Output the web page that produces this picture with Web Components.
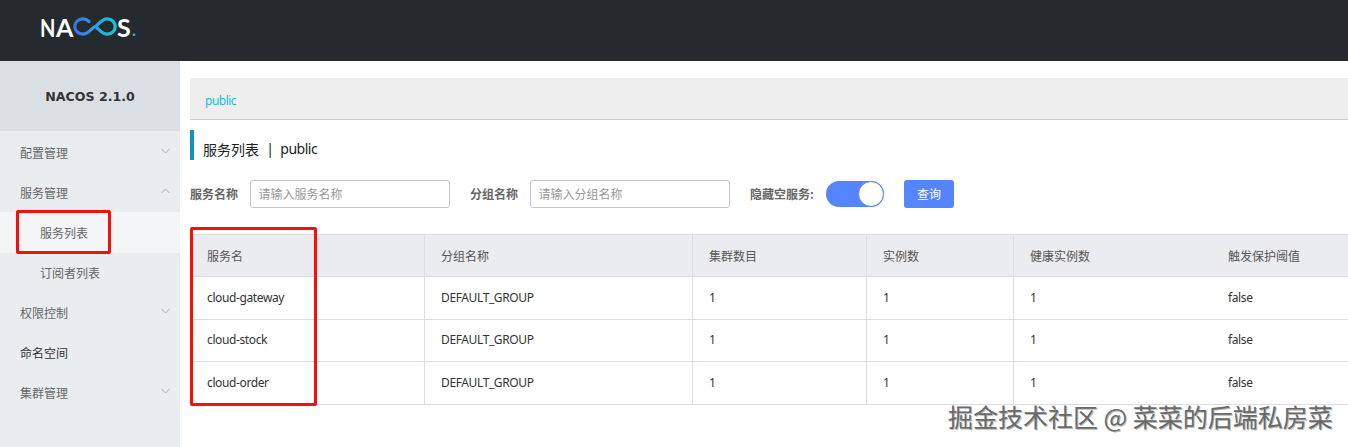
<!DOCTYPE html>
<html lang="zh"><head><meta charset="utf-8"><title>Nacos</title>
<style>
html,body{margin:0;padding:0;height:447px;overflow:hidden;background:#fff;font-family:"Noto Sans","Noto Sans CJK SC",sans-serif;font-size:12px;color:#333}
</style></head><body>
<nacos-app>
  <nacos-header slot="header"></nacos-header>
  <nacos-sidebar slot="sidebar" version="NACOS 2.1.0">
    <nav-item arrow="down">配置管理</nav-item>
    <nav-item arrow="up">服务管理</nav-item>
    <nav-item sub active>服务列表</nav-item>
    <nav-item sub>订阅者列表</nav-item>
    <nav-item arrow="down">权限控制</nav-item>
    <nav-item dark>命名空间</nav-item>
    <nav-item arrow="down">集群管理</nav-item>
  </nacos-sidebar>
  <namespace-bar>public</namespace-bar>
  <page-title sub="public">服务列表</page-title>
  <search-bar></search-bar>
  <service-table></service-table>
</nacos-app>
<script>
const CJK='"Noto Sans CJK SC",sans-serif';
function def(name,html){
  customElements.define(name,class extends HTMLElement{
    connectedCallback(){
      if(this.shadowRoot)return;
      const r=this.attachShadow({mode:'open'});
      r.innerHTML=typeof html==='function'?html(this):html;
    }
  });
}
def('nacos-app',`<style>
:host{display:grid;position:relative;grid-template-columns:180px 1fr;grid-template-rows:61px 386px;width:1348px;height:447px;overflow:hidden}
.h{grid-column:1/3}
main{padding:17px 0 0 10px;min-width:0;overflow:hidden}
.mark{position:absolute;box-sizing:border-box;border:3px solid #f5100c;border-radius:2px;pointer-events:none}
.m1{left:16px;top:210px;width:94.500px;height:43.500px}
.m2{left:190px;top:226.500px;width:127px;height:179.500px}
.wm{position:absolute;left:948px;top:399px;font:25px/34px ${CJK};color:#6a6a6a;white-space:nowrap;text-shadow:1px 1px 0 #bdbdbd}
</style>
<div class="h"><slot name="header"></slot></div>
<slot name="sidebar"></slot>
<main><slot></slot></main>
<div class="mark m1"></div><div class="mark m2"></div>
<div class="wm">掘金技术社区 @ 菜菜的后端私房菜</div>`);
def('nacos-header',`<style>
:host{display:flex;align-items:center;height:61px;background:#252a2f;padding-left:40px;box-sizing:border-box}
.logo{display:flex;align-items:center;height:20px;margin-top:-8px;font:700 25px/20px Lato,"Noto Sans",sans-serif;color:#fff}
.n{display:inline-block;width:16px;transform:scaleX(.8);transform-origin:0 50%}
.a{display:inline-block;width:17px;transform:scaleX(1);transform-origin:0 50%}
svg{display:block;margin:0;flex:none}
.s{display:inline-block;width:14px}
.dot{color:#1cc0d8;font-size:17px;margin:6px 0 0 1px}
</style><div class="logo"><span class="n">N</span><span class="a">A</span><svg width="44" height="19" viewBox="0 0 44 19" fill="none" stroke-width="3.2" stroke-linecap="round">
<defs><linearGradient id="g" x1="0" x2="1" y1="0" y2="0"><stop offset="0" stop-color="#3f6fe8"/><stop offset=".5" stop-color="#2f9fe0"/><stop offset="1" stop-color="#1cc4da"/></linearGradient></defs>
<path stroke="url(#g)" d="M16 4.500C14 2.700 12 1.800 9.800 1.800 5.200 1.800 1.800 5.200 1.800 9.500s3.400 7.700 8 7.700c6 0 10.200-7.700 12.200-7.700s6.200 7.700 12.200 7.700c4.600 0 8-3.400 8-7.700s-3.400-7.700-8-7.700c-6 0-10.200 7.700-12.200 7.700"/></svg><span class="s">S</span><span class="dot">.</span></div>`);
def('nacos-sidebar',h=>`<style>
:host{display:block;background:#e9edf0;height:386px}
.v{height:70px;background:#dadfe3;display:flex;align-items:center;justify-content:center;font:700 12.6px "DejaVu Sans",sans-serif;color:#333;margin-bottom:2px}
</style><div class="v">${h.getAttribute('version')}</div><slot></slot>`);
def('nav-item',h=>{
  const a=h.getAttribute('arrow');
  const sub=h.hasAttribute('sub'),act=h.hasAttribute('active'),dark=h.hasAttribute('dark');
  return `<style>
:host{display:flex;align-items:center;justify-content:space-between;height:${act?41:40}px;${act?'margin-top:-1px;padding-top:1px;':''}box-sizing:border-box;padding-left:${sub?40:20}px;padding-right:10px;font:12px/40px ${CJK};color:${dark?'#333':'#666'};background:${act?'#f3f5f7':'transparent'}}
svg{display:block;margin-top:-5px}
</style><span><slot></slot></span>${a?`<svg width="9" height="6" viewBox="0 0 9 6" fill="none" stroke="#a9afb5" stroke-width="1"><path d="${a==='down'?'M.5 1l4 4 4-4':'M.5 5l4-4 4 4'}"/></svg>`:''}`;
});
def('namespace-bar',`<style>
:host{display:block;box-sizing:border-box;height:42px;background:#eee;border-bottom:1px solid #ccc;padding-left:15px;font:12px/46px "Noto Sans",sans-serif;letter-spacing:-.5px;color:#18bcd6}
</style><slot></slot>`);
def('page-title',h=>`<style>
:host{display:flex;align-items:center;height:30px;margin-top:10px;border-left:4px solid #1391c0;padding-left:9px;box-sizing:border-box;padding-top:8px;font:14px/22px "Noto Sans",${CJK};color:#222;white-space:pre}
.z{font:14px/22px ${CJK}}
.p{letter-spacing:-.5px;margin-left:-1px}
</style><span class="z"><slot></slot></span><span>  |  <span class="p">${h.getAttribute('sub')}</span></span>`);
def('text-field',h=>`<style>
:host{display:block;box-sizing:border-box;width:200px;height:28px;border:1px solid #c4c6cf;border-radius:3px;padding-left:7.500px;font:12px/26px ${CJK};color:#999;background:#fff}
</style>${h.getAttribute('placeholder')}`);
def('toggle-switch',`<style>
:host{display:block;box-sizing:border-box;width:58px;height:26px;border-radius:13px;background:#5584ff;position:relative}
i{position:absolute;right:0;top:0;width:26px;height:26px;box-sizing:border-box;border-radius:50%;background:#fff;border:1px solid #5584ff}
</style><i></i>`);
def('search-bar',`<style>
:host{display:flex;align-items:center;height:28px;margin-top:20px;font:700 12px/28px ${CJK};color:#666}
.l{width:60px}.l2{margin-left:20px;width:60px}.l3{margin-left:20px;width:76px}
button{all:unset;box-sizing:border-box;margin-left:20px;width:50px;height:28px;background:#5584ff;border-radius:3px;color:#fff;text-align:center;font:12px/28px ${CJK}}
</style><span class="l">服务名称</span><text-field placeholder="请输入服务名称"></text-field><span class="l2">分组名称</span><text-field placeholder="请输入分组名称"></text-field><span class="l3">隐藏空服务:</span><toggle-switch></toggle-switch><button>查询</button>`);
def('service-table',h=>{
  const head=['服务名','分组名称','集群数目','实例数','健康实例数','触发保护阈值'];
  const rows=['cloud-gateway','cloud-stock','cloud-order'];
  const cell=(t,c='')=>`<div class="c ${c}">${t}</div>`;
  return `<style>
:host{display:grid;grid-template-columns:234px 268px 174px 147px 198px 137px;grid-auto-rows:42.4px;margin-top:26px;width:1158px;border-top:1px solid #dcdee3;box-sizing:border-box;font:12px/16px "Noto Sans",${CJK};letter-spacing:-.38px;color:#333}
.c{box-sizing:border-box;display:flex;align-items:center;padding-left:16px;border-bottom:1px solid #dcdee3;border-left:1px solid #dcdee3;white-space:nowrap}
.c:nth-child(6n+1){border-left:0;padding-left:17px}
.h{background:#ebecf0;color:#555;font:12px ${CJK};letter-spacing:0}
</style>${head.map(t=>cell(t,'h')).join('')}${rows.map(r=>[r,'DEFAULT_GROUP','1','1','1','false'].map(t=>cell(t)).join('')).join('')}`;
});
</script>
</body></html>
